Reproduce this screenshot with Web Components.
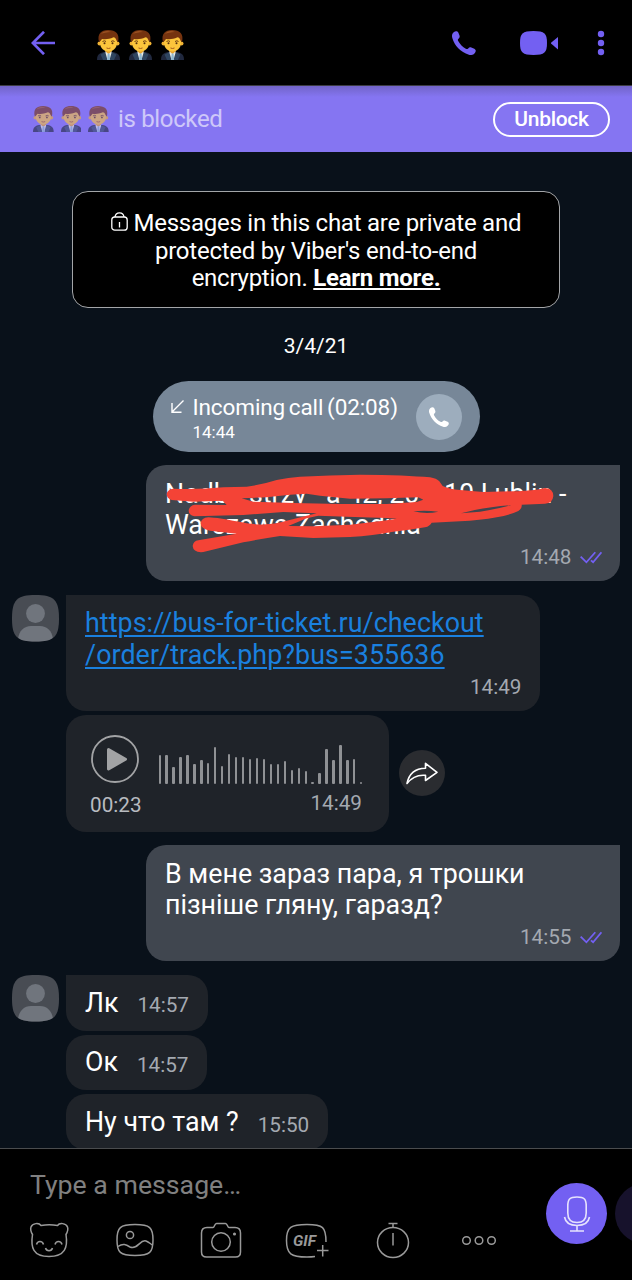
<!DOCTYPE html>
<html lang="en">
<head>
<meta charset="utf-8">
<title>Chat</title>
<style>
	body{
		margin: 0;
		background-color: #09111a;
		font-family: Roboto, "Noto Sans", sans-serif;
	}
</style>
</head>
<body>
<chat-app></chat-app>

<script>
class BaseElement extends HTMLElement {

	static get styles() { return ''; }
	static get markup() { return ''; }

	constructor() {
		super();
		const template = document.createElement('template');
		template.innerHTML = this.constructor.styles + this.constructor.markup;

		this.attachShadow({ mode: 'open' });
		this.shadowRoot.appendChild(template.content.cloneNode(true));
	}
}

class EmojiMan extends BaseElement {

	static get styles() {
		return `
		<style>
		:host{
			display: block;
			width: 23px;
			height: 30px;
		}
		svg{
			display: block;
			width: 100%;
			height: 100%;
		}
		</style>
		`
	}

	static get markup() {
		return `
		<svg viewBox="0 0 23 30" preserveAspectRatio="none">
			<path d="M0 30c0-5 2-7 7-8h9c5 1 7 3 7 8z" fill="#20283e"/>
			<path d="M3.500 24.500l5-2.500 2.500 8H6zM19.500 24.500l-5-2.500-2.500 8h5z" fill="#2f4560"/>
			<path d="M8.500 20h6v3l-2 7h-2l-2-7z" fill="#e9ece6"/>
			<path d="M8.500 18h6v3.500l-3 2.500-3-2.500z" fill="#e8a32c"/>
			<path d="M10.700 23.500h1.800l.6 6.500h-3z" fill="#8eb6cf"/>
			<circle cx="2.500" cy="13.500" r="2" fill="#f0b233"/>
			<circle cx="20.500" cy="13.500" r="2" fill="#f0b233"/>
			<path d="M3 8c0-5 3-7 8.500-7S20 3 20 8v5c0 5-4.500 8.500-8.500 8.500S3 18 3 13z" fill="#fcc53c"/>
			<path d="M2 12C0 4 4 0 11 0c8 0 12 4 10 12l-1.500-1.500c-.5-2-1.500-3-3-3.200C12 9.500 8 9.500 5 9l-1.500 2z" fill="#75330f"/>
			<path d="M4 4c2-3 6-4 10-2-4 0-8 1-10 2z" fill="#9a5122"/>
			<path d="M5.500 11.500q2-1.400 3.500 0M14 11.500q2-1.400 3.500 0" stroke="#6b3b12" fill="none"/>
			<circle cx="7.500" cy="13.200" r="1" fill="#57310f"/>
			<circle cx="15.500" cy="13.200" r="1" fill="#57310f"/>
			<path d="M9.500 18q2 1 4 0" stroke="#a65a1c" fill="none"/>
		</svg>
		`
	}
}
customElements.define('emoji-man', EmojiMan);

class PhoneIcon extends BaseElement {

	static get styles() {
		return `
		<style>
		:host{
			display: block;
			width: 24px;
			height: 24px;
		}
		svg{
			display: block;
			width: 100%;
			height: 100%;
		}
		</style>
		`
	}

	static get markup() {
		return `
		<svg viewBox="0 0 24 24" fill="currentColor">
			<path d="M1.700 1.200C3.500-.3 5.500 0 6.300 1.600l1.200 3c.5 1.300 0 2.300-1 3.100-.8.700-.8 1.500-.3 2.400 1.800 3.200 4.400 5.900 7.600 7.700.9.500 1.700.4 2.400-.4.800-.9 1.800-1.400 3.100-.9l3 1.200c1.600.7 2 2.600.6 4.300-1.500 1.800-3.400 2.500-6 1.700C8.500 21.200 2.500 14.500.3 7 -.4 4.500.1 2.700 1.700 1.200z"/>
		</svg>
		`
	}
}
customElements.define('phone-icon', PhoneIcon);

class ChatHeader extends BaseElement {

	static get styles() {
		return `
		<style>
		:host{
			display: flex;
			align-items: center;
			box-sizing: border-box;
			height: 86px;
			padding: 1px 27px 0 31px;
			background-color: #000;
			border-bottom: 1px solid #3c3c44;
			color: #7360f2;
		}
		.names{
			display: flex;
			gap: 9px;
			margin: 3px 0 0 42px;
			flex: 1;
		}
		.video{
			margin: 0 38px 0 44px;
		}
		</style>
		`
	}

	static get markup() {
		return `
		<svg width="24" height="24" viewBox="0 0 24 24" fill="none" stroke="currentColor" stroke-width="2.700"><path d="M13 .8L1.800 12 13 23.200M1.800 12H24"/></svg>
		<div class="names"><emoji-man></emoji-man><emoji-man></emoji-man><emoji-man></emoji-man></div>
		<phone-icon></phone-icon>
		<svg class="video" width="39" height="24" viewBox="0 0 39 24" fill="currentColor">
			<path d="M13.500 0C24.500 0 27 2.500 27 12s-2.500 12-13.500 12S0 21.500 0 12 2.500 0 13.500 0z"/>
			<path d="M38 6v12.500L31 12.500v-.8z"/>
		</svg>
		<svg width="8" height="26" viewBox="0 0 8 26" fill="currentColor"><circle cx="4" cy="4" r="3.200"/><circle cx="4" cy="13" r="3.200"/><circle cx="4" cy="22" r="3.200"/></svg>
		`
	}
}
customElements.define('chat-header', ChatHeader);

class BlockBanner extends BaseElement {

	static get styles() {
		return `
		<style>
		:host{
			display: flex;
			align-items: center;
			box-sizing: border-box;
			height: 66px;
			padding: 0 22px 0 33px;
			background: linear-gradient(#7164c8, #8575f2 11px);
			color: #fff;
		}
		.who{
			display: flex;
			align-items: center;
			gap: 7px;
			flex: 1;
			opacity: .6;
			font-size: 24px;
			letter-spacing: -.35px;
		}
		emoji-man{
			width: 20.700px;
			height: 26px;
		}
		.text{
			margin-left: 2px;
		}
		button{
			box-sizing: border-box;
			width: 117px;
			height: 35px;
			padding: 0 0 1px;
			border: 2px solid #fff;
			border-radius: 18px;
			background: none;
			color: #fff;
			font: 500 21px Roboto, sans-serif;
			letter-spacing: -.3px;
		}
		</style>
		`
	}

	static get markup() {
		return `
		<div class="who"><emoji-man></emoji-man><emoji-man></emoji-man><emoji-man></emoji-man><span class="text"><slot></slot></span></div>
		<button>Unblock</button>
		`
	}
}
customElements.define('block-banner', BlockBanner);

class PrivacyNotice extends BaseElement {

	static get styles() {
		return `
		<style>
		:host{
			display: block;
			box-sizing: border-box;
			width: 488px;
			height: 117px;
			margin: 0 auto;
			padding-top: 18px;
			border: 1px solid #a3a5a8;
			border-radius: 16px;
			background-color: #000;
			color: #fff;
			font-size: 24px;
			line-height: 27.700px;
			letter-spacing: -.25px;
			text-align: center;
		}
		b{
			text-decoration: underline;
			text-decoration-thickness: 1.500px;
			text-underline-offset: 2px;
		}
		</style>
		`
	}

	static get markup() {
		return `
		<svg width="17" height="19" viewBox="0 0 17 19" fill="none" stroke="currentColor" stroke-width="1.300"><rect x=".8" y="5" width="15.400" height="13.200" rx="3"/><path d="M4 5C4.300 2.300 6 .8 8.500.8S12.700 2.300 13 5M8.500 10v5.500"/></svg>
		Messages in this chat are private and<br>protected by Viber's end-to-end<br>encryption. <b>Learn more.</b>
		`
	}
}
customElements.define('privacy-notice', PrivacyNotice);

class CallPill extends BaseElement {

	static get styles() {
		return `
		<style>
		:host{
			display: flex;
			box-sizing: border-box;
			width: 327px;
			height: 71px;
			margin: 0 auto;
			padding: 0 18px;
			border-radius: 36px;
			background-color: #778798;
			color: #fff;
		}
		.arrow{
			margin: 19px 9px 0 0;
		}
		.text{
			flex: 1;
			padding-top: 13px;
			white-space: nowrap;
		}
		.title{
			font-size: 22.500px;
			line-height: 27px;
			letter-spacing: -.1px;
			word-spacing: -1.800px;
		}
		.time{
			font-size: 17px;
			line-height: 23px;
		}
		.call{
			display: flex;
			align-items: center;
			justify-content: center;
			align-self: center;
			width: 46px;
			height: 46px;
			border-radius: 50%;
			background-color: #9dadbd;
		}
		phone-icon{
			width: 20px;
			height: 20px;
		}
		</style>
		`
	}

	static get markup() {
		return `
		<svg class="arrow" width="13" height="13" viewBox="0 0 13 13" fill="none" stroke="currentColor" stroke-width="1.400"><path d="M12.500.5L1 12M1 3v9.200h9.500"/></svg>
		<div class="text">
			<div class="title"><slot></slot></div>
			<div class="time"><slot name="time"></slot></div>
		</div>
		<div class="call"><phone-icon></phone-icon></div>
		`
	}
}
customElements.define('call-pill', CallPill);

class UserAvatar extends BaseElement {

	static get styles() {
		return `
		<style>
		:host{
			display: block;
			width: 47px;
			height: 47px;
		}
		svg{
			display: block;
		}
		</style>
		`
	}

	static get markup() {
		return `
		<svg width="47" height="47" viewBox="0 0 47 47">
			<clipPath id="shape"><path d="M23.500 0C42 0 47 5 47 23.500S42 46.500 23.500 46.500 0 42 0 23.500 5 0 23.500 0z"/></clipPath>
			<g clip-path="url(#shape)">
				<rect width="47" height="47" fill="#484c53"/>
				<circle cx="23.500" cy="18.500" r="9.400" fill="#70757d"/>
				<path d="M6 44c1-8 6-13 13-13h9c7 0 12 5 13 13v3H6z" fill="#70757d"/>
			</g>
		</svg>
		`
	}
}
customElements.define('user-avatar', UserAvatar);

class MessageRow extends BaseElement {

	static get styles() {
		return `
		<style>
		:host{
			display: flex;
			margin: 0 12px 4px;
		}
		:host([last]){
			margin-bottom: 13.500px;
		}
		:host([out]){
			justify-content: flex-end;
		}
		.side{
			width: 47px;
			margin-right: 7px;
		}
		:host([out]) .side{
			display: none;
		}
		</style>
		`
	}

	static get markup() {
		return `
		<div class="side"><slot name="avatar"></slot></div>
		<slot></slot>
		`
	}
}
customElements.define('message-row', MessageRow);

class MessageBubble extends BaseElement {

	static get styles() {
		return `
		<style>
		:host{
			display: flex;
			flex-direction: column;
			position: relative;
			box-sizing: border-box;
			width: 474px;
			height: 116.250px;
			padding: 13.500px 18.500px 0 19px;
			border-radius: 20px;
			background-color: #1f2329;
			color: #fff;
			font-size: 26.800px;
			line-height: 31.800px;
			white-space: nowrap;
		}
		:host([first]){
			border-top-left-radius: 0;
		}
		:host([out]){
			border-top-right-radius: 0;
			background-color: #40464f;
		}
		:host([short]){
			flex-direction: row;
			align-items: center;
			justify-content: space-between;
			width: auto;
			height: 55.750px;
			padding: 2px 19px 0;
		}
		.meta{
			display: flex;
			align-items: center;
			justify-content: flex-end;
			gap: 8px;
			margin-top: 3px;
			color: #a4a9b1;
			font-size: 20.700px;
			line-height: 25px;
		}
		:host([short]) .meta{
			margin: 4px 0 0 19px;
		}
		.ticks{
			display: none;
		}
		:host([out]) .ticks{
			display: block;
		}
		::slotted(a){
			color: #1a80df;
			letter-spacing: .08px;
			text-decoration: underline;
			text-decoration-thickness: 1.500px;
			text-underline-offset: 3px;
		}
		</style>
		`
	}

	static get markup() {
		return `
		<div class="text"><slot></slot></div>
		<div class="meta"><slot name="time"></slot>
			<svg class="ticks" width="22" height="13" viewBox="0 0 23 13" fill="none" stroke="#7360f2" stroke-width="1.900"><path d="M.7 5.500l6 6L16 1M11.500 9.500l2.200 2L22.400 1"/></svg>
		</div>
		<slot name="overlay"></slot>
		`
	}
}
customElements.define('message-bubble', MessageBubble);

// Address line with the hidden parts left out, kept in place by spacers
class RedactedText extends BaseElement {

	static get styles() {
		return `
		<style>
		:host{
			display: block;
		}
		.line{
			display: flex;
			height: 31.800px;
		}
		.line span{
			box-sizing: border-box;
			flex: none;
		}
		</style>
		`
	}

	static get markup() {
		return `
		<div class="line"><span style="width:84px">Nadb</span><span style="width:77px">strzy</span><span style="width:118px">a 42, 20</span><span>10 Lublin -</span></div>
		<div class="line"><span>Warszawa Zachodnia</span></div>
		`
	}
}
customElements.define('redacted-text', RedactedText);

class RedScribble extends BaseElement {

	static get styles() {
		return `
		<style>
		:host{
			position: absolute;
			inset: 0;
		}
		svg{
			display: block;
			width: 474px;
			height: 116.700px;
		}
		</style>
		`
	}

	static get markup() {
		return `
		<svg viewBox="18 30 1422 350" fill="#f44336">
			<path fill-rule="evenodd" d="M80 117Q82 103 100 101Q180 104 250 97L320 95Q370 88 410 75Q445 67 480 65Q570 61 660 59Q800 60 870 67Q890 70 898 79L908 93Q930 103 960 105L1030 111L1110 109Q1160 108 1190 104L1215 99Q1240 101 1240 123Q1238 145 1215 146L1145 149Q1147 160 1135 168Q1110 180 1070 187Q1020 196 960 199L875 203Q870 213 855 217Q810 225 760 230Q700 242 630 246L520 249L420 243Q370 250 310 262L190 291Q160 294 158 273Q160 258 175 256L290 236L210 227Q182 222 182 205Q184 188 205 187Q230 187 320 205Q370 212 410 205L470 190L530 175L430 171L310 180L163 184Q146 180 146 167Q148 151 165 149L260 150L248 137L160 140L95 135Q80 130 80 117z
				M305 130L380 127L450 119L500 116L540 122L630 131L740 130L835 127L850 134L830 141L740 147L600 147L460 144L340 140z
				M445 213L500 190L535 182L620 185L740 189L770 191L730 197L630 209L520 214z
				M820 169Q855 165 895 170Q860 178 820 169z
				M963 175Q1030 156 1115 150Q1070 162 1020 170z"/>
		</svg>
		`
	}
}
customElements.define('red-scribble', RedScribble);

class VoiceMessage extends BaseElement {

	static get styles() {
		return `
		<style>
		:host{
			display: flex;
			align-items: center;
			gap: 10px;
		}
		.bubble{
			display: flex;
			box-sizing: border-box;
			width: 323px;
			height: 116.500px;
			padding: 20px 0 0 24px;
			border-radius: 20px;
			background-color: #1f2329;
			color: #a4a9b1;
			font-size: 20.700px;
			line-height: 25px;
		}
		.player{
			width: 50px;
		}
		.player svg{
			display: block;
			margin: 0 0 9.500px 1px;
		}
		.player div{
			color: #b8bbc0;
		}
		.track{
			width: 204px;
			margin-left: 18.500px;
		}
		.wave{
			display: flex;
			align-items: flex-end;
			justify-content: space-between;
			height: 49px;
			margin-bottom: 6.500px;
		}
		.bar{
			width: 2.300px;
			border-radius: 1px;
			background-color: #8f9194;
		}
		.time{
			margin-right: .5px;
			text-align: right;
		}
		.forward{
			display: flex;
			align-items: center;
			justify-content: center;
			width: 46px;
			height: 46px;
			border-radius: 50%;
			background-color: #2a2c30;
		}
		</style>
		`
	}

	static get markup() {
		return `
		<div class="bubble">
			<div class="player">
				<svg width="48" height="48" viewBox="0 0 48 48"><circle cx="24" cy="24" r="23" fill="none" stroke="#a2a3a5" stroke-width="1.800"/><path d="M17.500 14.500l17 9.700-17 9.700z" fill="#a2a3a5" stroke="#a2a3a5" stroke-width="3" stroke-linejoin="round"/></svg>
				<div><slot name="length"></slot></div>
			</div>
			<div class="track">
				<div class="wave"></div>
				<div class="time"><slot name="time"></slot></div>
			</div>
		</div>
		<div class="forward">
			<svg width="32" height="23" viewBox="0 0 32 23" fill="none" stroke="#fff" stroke-width="1.600" stroke-linejoin="round"><path d="M1 21.500C3 11.500 9 6.500 19.500 6.300V1.300L31 10.300 19.500 18.500v-5.200C11.500 12.500 6 15 1 21.500z"/></svg>
		</div>
		`
	}

	constructor() {
		super();
		this.wave = this.shadowRoot.querySelector('.wave');
		this.createBars();
	}

	createBars() {
		const heights = [29, 29, 17, 27, 29, 20, 24, 21, 37, 18, 30, 27, 27, 25, 26, 25, 20, 20, 23, 14, 16, 13, 2, 11, 35, 24, 39, 24, 25, 2];
		for(let i = 0; i < heights.length; ++i){
			let bar = document.createElement('div');
			bar.classList.add('bar');
			bar.style.height = heights[i] + 'px';
			this.wave.append(bar);
		}
	}
}
customElements.define('voice-message', VoiceMessage);

class MessageComposer extends BaseElement {

	static get styles() {
		return `
		<style>
		:host{
			display: flex;
			box-sizing: border-box;
			height: 132px;
			overflow: hidden;
			border-top: 1px solid #4a4c4e;
			background-color: #000;
			color: #808080;
		}
		.left{
			flex: none;
			width: 546px;
		}
		.placeholder{
			padding: 20px 0 0 30px;
			font-size: 26.700px;
			line-height: 32px;
		}
		.tools{
			display: flex;
			align-items: center;
			gap: 42px;
			height: 44px;
			margin: 17px 0 0 26.500px;
			color: #999;
		}
		.tools svg{
			flex: none;
			overflow: visible;
			fill: none;
			stroke: currentColor;
			stroke-width: 1.500;
		}
		.tools text{
			fill: currentColor;
			stroke: none;
			font: italic 700 14px Roboto, sans-serif;
		}
		.round{
			display: flex;
			align-items: center;
			justify-content: center;
			flex: none;
			width: 61px;
			height: 61px;
			margin: 34px 8px 0 0;
			border-radius: 50%;
			background-color: #7360f2;
		}
		.next{
			background-color: #17122c;
		}
		</style>
		`
	}

	static get markup() {
		return `
		<div class="left">
			<div class="placeholder"><slot></slot></div>
			<div class="tools">
				<svg width="44" height="44" viewBox="0 0 44 44"><path d="M14 7.500c6-1 10.500-1 16.500 0 2-3 8.500-2.500 10 1.500 1 3 0 5-1.500 7.500 2 13-1 22-17 22S3.500 29.500 5.500 16.500C4 14 3 12 4 9c1.500-4 8-4.500 10-1.500z"/><path d="M9.500 26.500c1-4 6-4 7 0M28 26.500c1-4 6-4 7 0M18.500 30c1 3.500 6 3.500 7 0"/></svg>
				<svg width="44" height="44" viewBox="0 0 44 44"><path d="M22 6.500c15 0 18 3 18 15.500s-3 15.500-18 15.500S4 34.500 4 22 7 6.500 22 6.500z"/><circle cx="17" cy="17" r="3.600"/><path d="M5 28.500c5-3.500 8-2 12 .5 8 3 10-8 16-6 3 1 4.500 3 6.500 4"/></svg>
				<svg width="44" height="44" viewBox="0 0 44 44"><path d="M8 9.500h6c1.500 0 1.500-4 3.500-4h9c2 0 2 4 3.500 4h6c4 0 5.500 2 5.500 5.500V34c0 3-1.500 5-5 5H7.500c-3.500 0-5-2-5-5V15c0-3.500 1.500-5.500 5.500-5.500z"/><circle cx="22" cy="24" r="9.300"/><circle cx="35.500" cy="16" r=".8"/></svg>
				<svg width="44" height="44" viewBox="0 0 44 44"><path d="M30 38.500c-2 .3-5 .5-8 .5C6 39 1.500 36 1.500 22.500S6 6.500 22 6.500 41 9 41 24M32 32.500h11.500M37.700 27v11.500"/><text x="8" y="27.500" textLength="23" lengthAdjust="spacingAndGlyphs">GIF</text></svg>
				<svg width="44" height="44" viewBox="0 0 44 44"><ellipse cx="22" cy="24.500" rx="15.500" ry="15"/><path d="M17.500 5.500h9M22 5.500v4M22 15v12.500"/></svg>
				<svg width="44" height="44" viewBox="0 0 44 44"><circle cx="9.500" cy="22.500" r="3.800"/><circle cx="22" cy="22.500" r="3.800"/><circle cx="34.500" cy="22.500" r="3.800"/></svg>
			</div>
		</div>
		<div class="round"><svg width="28" height="36" viewBox="0 0 28 36" fill="none" stroke="#e6e2fd" stroke-width="1.600"><path d="M14 1c7.500 0 9.200 2.500 9.200 9v7c0 6.500-3 9.500-9.200 9.500S4.800 23.500 4.800 17v-7C4.800 3.500 6.500 1 14 1zM1.500 21c1 5.500 5 8.500 12.500 8.500S25.500 26.500 26.500 21M14 29.500V35M7 35h14"/></svg></div>
		<div class="round next"></div>
		`
	}
}
customElements.define('message-composer', MessageComposer);

class ChatApp extends BaseElement {

	static get styles() {
		return `
		<style>
		:host{
			display: flex;
			flex-direction: column;
			width: 632px;
			height: 1280px;
			overflow: hidden;
		}
		.messages{
			flex: 1;
			min-height: 0;
			overflow: hidden;
			padding-top: 39px;
		}
		.date{
			margin: 25px 0 22px;
			color: #fff;
			font-size: 21px;
			line-height: 26px;
			text-align: center;
		}
		call-pill{
			margin-bottom: 13px;
		}
		</style>
		`
	}

	static get markup() {
		return `
		<chat-header></chat-header>
		<block-banner>is blocked</block-banner>
		<div class="messages">
			<privacy-notice></privacy-notice>
			<div class="date">3/4/21</div>
			<call-pill>Incoming call (02:08)<span slot="time">14:44</span></call-pill>
			<message-row out last>
				<message-bubble out><redacted-text></redacted-text><span slot="time">14:48</span><red-scribble slot="overlay"></red-scribble></message-bubble>
			</message-row>
			<message-row>
				<user-avatar slot="avatar"></user-avatar>
				<message-bubble first><a>https://bus-for-ticket.ru/checkout<br>/order/track.php?bus=355636</a><span slot="time">14:49</span></message-bubble>
			</message-row>
			<message-row last>
				<voice-message><span slot="length">00:23</span><span slot="time">14:49</span></voice-message>
			</message-row>
			<message-row out last>
				<message-bubble out>В мене зараз пара, я трошки<br>пізніше гляну, гаразд?<span slot="time">14:55</span></message-bubble>
			</message-row>
			<message-row>
				<user-avatar slot="avatar"></user-avatar>
				<message-bubble first short>Лк<span slot="time">14:57</span></message-bubble>
			</message-row>
			<message-row>
				<message-bubble short>Ок<span slot="time">14:57</span></message-bubble>
			</message-row>
			<message-row>
				<message-bubble short>Ну что там ?<span slot="time">15:50</span></message-bubble>
			</message-row>
		</div>
		<message-composer>Type a message…</message-composer>
		`
	}
}
customElements.define('chat-app', ChatApp);
</script>
</body>
</html>
